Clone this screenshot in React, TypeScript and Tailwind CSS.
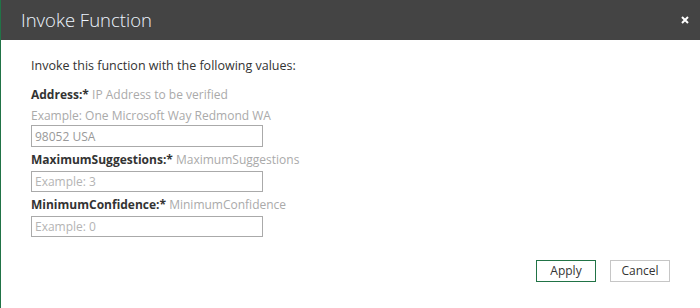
const fields = [
  {
    label: "Address:*",
    hint: "IP Address to be verified",
    example: "Example: One Microsoft Way Redmond WA",
    value: "98052 USA",
    placeholder: "",
  },
  {
    label: "MaximumSuggestions:*",
    hint: "MaximumSuggestions",
    example: "",
    value: "",
    placeholder: "Example: 3",
  },
  {
    label: "MinimumConfidence:*",
    hint: "MinimumConfidence",
    example: "",
    value: "",
    placeholder: "Example: 0",
  },
];

export default function App() {
  return (
    <div className="flex h-[308px] w-[700px] flex-col border-l border-[#217346] bg-white font-['Open_Sans',sans-serif]">
      <header className="flex h-10 items-center justify-between bg-[#444444] pl-5 pr-[11px]">
        <h1 className="text-[18.5px] font-light text-[#eef6ff]">Invoke Function</h1>
        <button type="button" aria-label="Close" className="text-white">
          <svg viewBox="0 0 8 8" className="size-2" fill="none" stroke="currentColor" strokeWidth="2">
            <path d="M1 1 7 7M7 1 1 7" />
          </svg>
        </button>
      </header>

      <div className="flex flex-1 flex-col px-[30px]">
        <p className="mt-[17px] text-[12.5px] leading-[18px] text-[#333]">
          Invoke this function with the following values:
        </p>

        <div className="mt-[10px] flex flex-col">
          {fields.map((field, i) => (
            <div key={field.label} className={i === 0 ? "" : "mt-[3px]"}>
              <div className="text-[12px] leading-[20px]">
                <span className="font-bold text-[#333]">{field.label}</span>{" "}
                <span className="text-[#aaa]">{field.hint}</span>
              </div>
              {field.example ? (
                <div className="mt-[3px] text-[12px] leading-[16px] text-[#aaa]">{field.example}</div>
              ) : null}
              <input
                readOnly
                value={field.value}
                placeholder={field.placeholder}
                className={`mt-[1px] block w-[232px] border border-[#aaa] px-[3px] text-[12px] text-[#999] outline-none placeholder:text-[#b4b4b4] ${
                  i === 0 ? "h-[22px]" : "h-[21px]"
                }`}
              />
            </div>
          ))}
        </div>

        <div className="mt-auto mb-[26px] flex justify-end gap-[14px]">
          <button
            type="button"
            className="h-[22px] w-[60px] border border-[#217346] text-[12px] text-[#333]"
          >
            Apply
          </button>
          <button
            type="button"
            className="h-[22px] w-[60px] border border-[#c6c6c6] text-[12px] text-[#333]"
          >
            Cancel
          </button>
        </div>
      </div>
    </div>
  );
}
